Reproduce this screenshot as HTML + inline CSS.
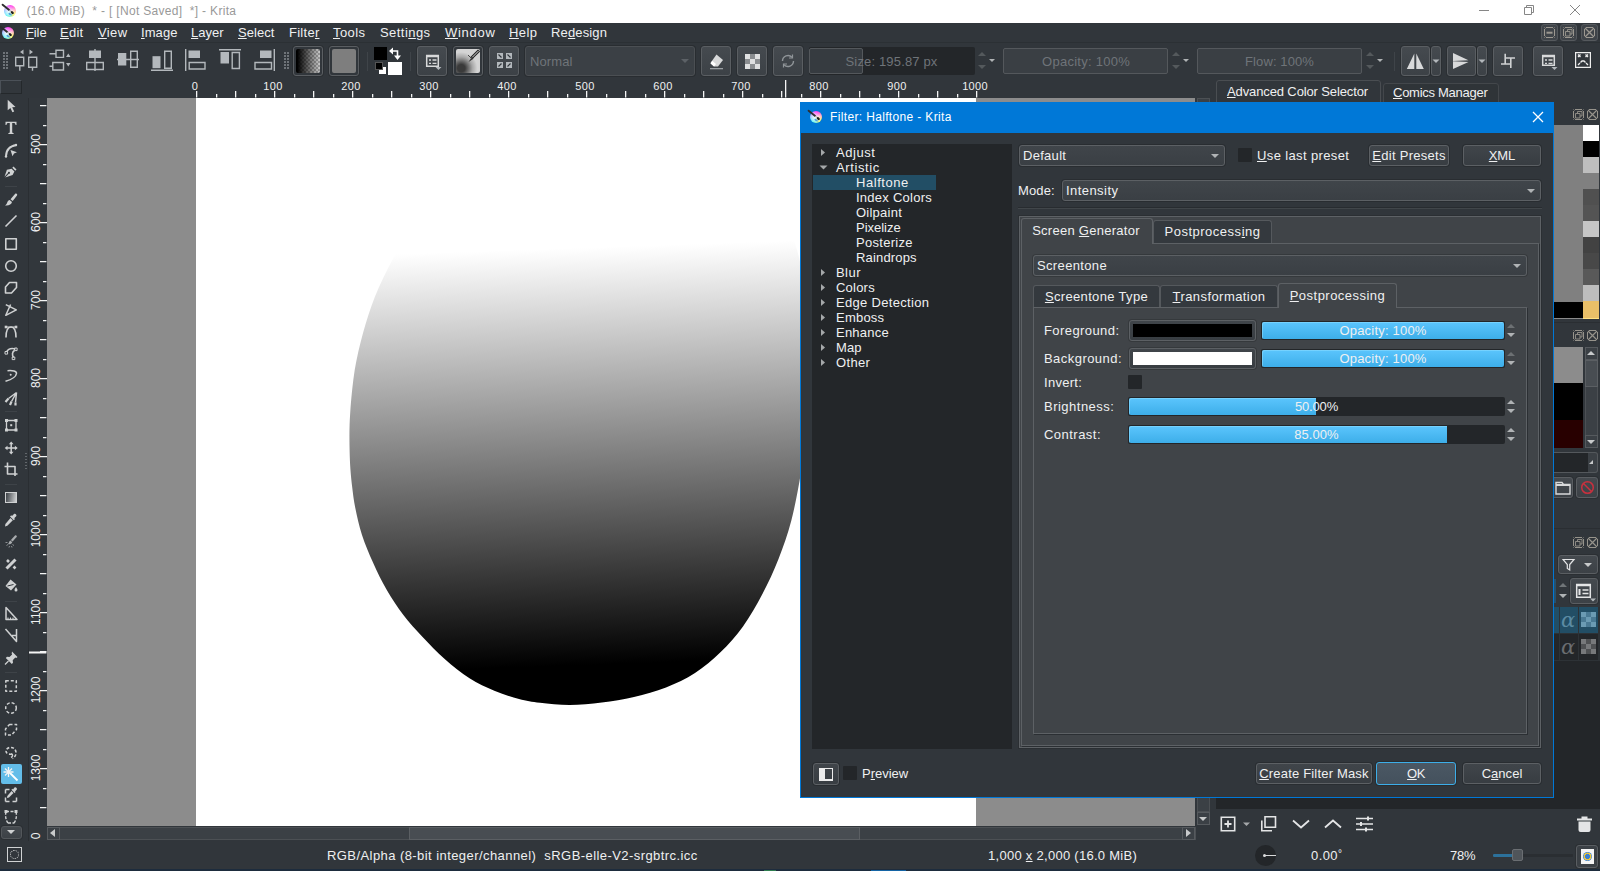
<!DOCTYPE html>
<html><head><meta charset="utf-8"><title>Krita</title>
<style>
*{box-sizing:border-box;margin:0;padding:0}
html,body{width:1600px;height:871px;overflow:hidden;background:#31363b}
body{position:relative;font-family:"Liberation Sans",sans-serif;font-size:13px;color:#eff0f1}
.abs{position:absolute}
u{text-decoration:underline;text-underline-offset:1px;text-decoration-thickness:1px}
.rl{width:40px;text-align:center;font-size:11px;line-height:12px;color:#eff0f1;letter-spacing:.300px}
.rlv{width:12px;height:40px;font-size:12px;line-height:12px;color:#eff0f1}
.rlv span{position:absolute;left:0;top:0;width:40px;height:12px;text-align:center;transform-origin:0 0;transform:rotate(-90deg) translate(-40px,0)}
/* dialog */
#dlg{left:800px;top:102px;width:754px;height:696px;background:#31363b;border:1px solid #0078d7;}
#dlg .tb{left:0;top:0;width:752px;height:30px;background:#0078d7}
.tree{background:#232629}
.ti{position:absolute;font-size:13px;line-height:15px;height:15px;white-space:nowrap;color:#eff0f1}
.combo{position:absolute;box-shadow:0 0 0 1px rgba(0,0,0,.16);border:1px solid #5c6064;border-radius:3px;background:linear-gradient(#40454a,#3a3f44);font-size:13px;color:#eff0f1;padding-left:3px;white-space:nowrap}
.btn{position:absolute;box-shadow:0 0 0 1px rgba(0,0,0,.16);border:1px solid #5c6064;border-radius:3px;background:linear-gradient(#40454a,#383d42);font-size:13px;color:#eff0f1;text-align:center;white-space:nowrap}
.arr{position:absolute;width:0;height:0;border-left:4px solid transparent;border-right:4px solid transparent;border-top:4px solid #b0b3b5}
.arru{position:absolute;width:0;height:0;border-left:4px solid transparent;border-right:4px solid transparent;border-bottom:4px solid #b0b3b5}
.tab{position:absolute;border:1px solid #55595d;border-bottom:none;border-radius:3px 3px 0 0;background:#34393e;font-size:13px;color:#eff0f1;text-align:center;white-space:nowrap}
.tab.sel{background:#404448;border-color:#5d6165}
.pane{position:absolute;border:1px solid #5d6165;background:#404448}
.lbl{position:absolute;font-size:13px;line-height:15px;white-space:nowrap;color:#eff0f1}
.sl{position:absolute;height:19px;background:#232629;border-radius:2px;overflow:hidden;font-size:13px;line-height:19px;text-align:center;color:#eff0f1}
.sl i{position:absolute;left:1px;top:1px;bottom:1px;background:linear-gradient(#5bc5fd,#3daee9);border-radius:2px 0 0 2px;box-shadow:inset 1px 1px 0 rgba(140,220,255,.55)}
.sl span{position:relative}
.chk{position:absolute;width:14px;height:14px;background:#232629;border-radius:1px}
.mi{top:25px;font-size:13px;line-height:16px;color:#eff0f1;white-space:nowrap}
.mdib{top:24px;width:17px;height:17px;border:1px solid #55595d;border-radius:3px;background:#3f4449}
.grip{width:6px;height:21px;background:radial-gradient(circle,#767b80 1px,transparent 1.300px) 0 0/3px 3px}
.tbtn{border:1px solid #5a5e62;border-radius:3px;background:linear-gradient(#454a4f,#3c4146);box-shadow:0 0 0 1px rgba(0,0,0,.12)}
.kico{width:18px;height:18px}
.kico i{position:absolute;left:2.800px;top:2.600px;width:12.600px;height:12.600px;border-radius:50%;background:radial-gradient(circle at 42% 55%,rgba(255,255,255,.95) 0,rgba(255,255,255,.6) 30%,rgba(255,255,255,0) 68%),conic-gradient(from 0deg,#ff3cf5 0deg,#ff5ae0 35deg,#ffb0c8 75deg,#fff36a 125deg,#eaff70 150deg,#5af0c8 185deg,#2ef2f5 215deg,#58c8ff 255deg,#b98cff 305deg,#ff3cf5 360deg)}
.kico svg{position:absolute;left:0;top:0}

</style></head>
<body>
<!-- titlebar -->
<div class="abs" style="left:0;top:0;width:1600px;height:23px;background:#fff"></div>
<div class="abs kico" style="left:1px;top:2px"><i></i><svg width="18" height="18" viewBox="0 0 18 18"><path d="M7.200 11.800Q9.500 14.600 12.300 12.800Q10 13.200 9 10.500z" fill="#3a8fe0" opacity=".85"/><path d="M1.600 2.700L8.200 8" stroke="#2e2e2e" stroke-width="1.900" stroke-linecap="round"/><path d="M8.500 8.200L10.300 9.700" stroke="#c4c4c4" stroke-width="1.500"/><ellipse cx="11.300" cy="10.600" rx="1.700" ry="1.200" transform="rotate(40 11.300 10.600)" fill="#1d1d1d"/></svg></div>
<div class="abs" style="letter-spacing:0.32px;font-size:12px;left:26.500px;top:4px;line-height:15px;color:#999;white-space:pre">(16.0 MiB)  * - [ [Not Saved]  *] - Krita</div>
<svg class="abs" style="left:1478px;top:4px" width="110" height="14" fill="none" stroke="#868686" stroke-width="1">
 <path d="M1 6.500H11"/>
 <path d="M46.500 3.500h7v7h-7zM48.500 3.500v-2h7v7h-2"/>
 <path d="M92 1l10 10M102 1l-10 10"/>
</svg>
<!-- menubar -->
<div class="abs" style="left:0;top:23px;width:1600px;height:21px;background:#31363b"></div>
<div class="abs kico" style="left:-1px;top:24px"><i></i><svg width="18" height="18" viewBox="0 0 18 18"><path d="M7.200 11.800Q9.500 14.600 12.300 12.800Q10 13.200 9 10.500z" fill="#3a8fe0" opacity=".85"/><path d="M1.600 2.700L8.200 8" stroke="#2e2e2e" stroke-width="1.900" stroke-linecap="round"/><path d="M8.500 8.200L10.300 9.700" stroke="#c4c4c4" stroke-width="1.500"/><ellipse cx="11.300" cy="10.600" rx="1.700" ry="1.200" transform="rotate(40 11.300 10.600)" fill="#1d1d1d"/></svg></div>
<div class="abs mi" style="letter-spacing:-0.11px;left:26px"><u>F</u>ile</div>
<div class="abs mi" style="letter-spacing:0.27px;left:60px"><u>E</u>dit</div>
<div class="abs mi" style="letter-spacing:0.39px;left:98px"><u>V</u>iew</div>
<div class="abs mi" style="letter-spacing:0.07px;left:141px"><u>I</u>mage</div>
<div class="abs mi" style="letter-spacing:-0.0px;left:191px"><u>L</u>ayer</div>
<div class="abs mi" style="letter-spacing:0.06px;left:238px"><u>S</u>elect</div>
<div class="abs mi" style="letter-spacing:0.27px;left:289px">Filte<u>r</u></div>
<div class="abs mi" style="letter-spacing:0.43px;left:333px"><u>T</u>ools</div>
<div class="abs mi" style="letter-spacing:0.44px;left:380px">Setti<u>n</u>gs</div>
<div class="abs mi" style="letter-spacing:0.71px;left:445px"><u>W</u>indow</div>
<div class="abs mi" style="letter-spacing:0.44px;left:509px"><u>H</u>elp</div>
<div class="abs mi" style="letter-spacing:0.13px;left:551px">Re<u>d</u>esign</div>
<!-- MDI buttons -->
<div class="abs mdib" style="left:1541px"></div><div class="abs mdib" style="left:1560px"></div><div class="abs mdib" style="left:1581px"></div>
<svg class="abs" style="left:1541px;top:24px" width="58" height="17" fill="none" stroke="#9c9890" stroke-width="1">
 <path d="M5 3.500h7M5 13.500h7M3.500 5v7M13.500 5v7M3.500 3.500l1 1M13.500 3.500l-1 1M3.500 13.500l1-1M13.500 13.500l-1-1"/><path d="M5.500 8.700h6" stroke-width="2"/>
 <path d="M24 3.500h7M24 13.500h7M22.500 5v7M32.500 5v7M22.500 3.500l1 1M32.500 3.500l-1 1M22.500 13.500l1-1M32.500 13.500l-1-1"/><path d="M24.500 7.500h4.500v4.500h-4.500zM26.500 7.500v-2h4.500v4.500h-2" stroke-width=".9"/>
 <path d="M45 3.500h7M45 13.500h7M43.500 5v7M53.500 5v7"/><path d="M44 4l9 9M53 4l-9 9" stroke-width="1.300"/>
</svg>
<!-- toolbar -->
<div class="abs" style="left:0;top:44px;width:1600px;height:34px;background:#31363b"></div>
<div class="abs" style="left:0;top:42px;width:1600px;height:1px;background:#2b3034"></div>
<!-- grips -->
<svg class="abs" style="left:3px;top:52px" width="5" height="17"><path d="M0 0h2v2h-2zM3 0h2v2h-2zM0 3h2v2h-2zM3 3h2v2h-2zM0 6h2v2h-2zM3 6h2v2h-2zM0 9h2v2h-2zM3 9h2v2h-2zM0 12h2v2h-2zM3 12h2v2h-2zM0 15h2v2h-2zM3 15h2v2h-2z" fill="#6e7378"/></svg>
<svg class="abs" style="left:284px;top:52px" width="5" height="17"><path d="M0 0h2v2h-2zM3 0h2v2h-2zM0 3h2v2h-2zM3 3h2v2h-2zM0 6h2v2h-2zM3 6h2v2h-2zM0 9h2v2h-2zM3 9h2v2h-2zM0 12h2v2h-2zM3 12h2v2h-2zM0 15h2v2h-2zM3 15h2v2h-2z" fill="#6e7378"/></svg>
<!-- align icons -->
<svg class="abs" style="left:0;top:44px" width="290" height="34" fill="none" stroke="#b3b8bc" stroke-width="1.4">
 <!-- 1 distribute h -->
 <path d="M23.5 5.5v5l-3.5-2.5zM29.5 5.5v5l3.5-2.5z" fill="#b3b8bc" stroke="none"/>
 <path d="M15.7 13.2h8v8.5h-8zM28.7 13.2h8v10h-8zM19.8 21.7v5M32.5 23.2v3.5"/>
 <!-- 2 distribute v -->
 <path d="M56 6.2h7.5v7.2h-7.5zM52.8 18.5h10.7v7.5h-10.7zM49.5 9.8h6.5M49.5 22.2h3.3"/>
 <path d="M66 13l2.3-3.5 2.3 3.5zM66 19l2.3 3.5 2.3-3.500z" fill="#b3b8bc" stroke="none"/>
 <!-- 3 align center h -->
 <rect x="89" y="6.5" width="12" height="7.5" fill="#b3b8bc" stroke="none"/>
 <path d="M86.7 18.5h16.600v7h-16.600zM95 5v22"/>
 <!-- 4 align center v -->
 <rect x="118" y="9" width="8.3" height="12.500" fill="#b3b8bc" stroke="none"/>
 <path d="M130.700 7.200h6.600v16h-6.600zM117 15.500h22"/>
 <!-- 5 align bottom -->
 <rect x="152.500" y="12.200" width="8" height="12" fill="#b3b8bc" stroke="none"/>
 <path d="M164.700 7.200h6.600v17h-6.600zM151 26.200h22"/>
 <!-- 6 align left -->
 <rect x="188.500" y="6.500" width="11.500" height="7.500" fill="#b3b8bc" stroke="none"/>
 <path d="M189.200 18.500h15.800v6.500h-15.800zM185.700 5v22"/>
 <!-- 7 align top -->
 <rect x="220.500" y="8" width="8.500" height="11.500" fill="#b3b8bc" stroke="none"/>
 <path d="M232.200 8.500h7.200v16h-7.200zM219 5.700h22"/>
 <!-- 8 align right -->
 <rect x="260" y="6.500" width="11.500" height="7.500" fill="#b3b8bc" stroke="none"/>
 <path d="M255 18.500h16.500v6.500h-16.500zM274.300 5v22"/>
</svg>
<!-- gradient / pattern buttons -->
<div class="abs tbtn" style="left:293px;top:46px;width:30px;height:30px;background:#31363b"><div class="abs" style="left:2px;top:2px;right:2px;bottom:2px;border-radius:2px;background:linear-gradient(90deg,#000 5%,rgba(0,0,0,0) 100%),repeating-conic-gradient(#999 0 25%,#c8c8c8 0 50%) 0 0/4px 4px"></div></div>
<div class="abs tbtn" style="left:329px;top:46px;width:30px;height:30px;background:#31363b"><div class="abs" style="left:2px;top:2px;right:2px;bottom:2px;border-radius:2px;background:#7e7e7e"></div></div>
<div class="abs" style="left:367px;top:52px;width:1px;height:19px;background:#3f4449"></div>
<!-- fg/bg -->
<div class="abs" style="left:388px;top:62px;width:14px;height:13px;background:#fff"></div>
<div class="abs" style="left:374px;top:47px;width:13px;height:13px;background:#000"></div>
<div class="abs" style="left:379px;top:67px;width:7px;height:7px;background:#fff"></div>
<div class="abs" style="left:375px;top:62px;width:8px;height:8px;background:#000;border:1px solid #555"></div>
<svg class="abs" style="left:388px;top:46px" width="14" height="15" fill="none" stroke="#fff" stroke-width="1.600"><path d="M2 5h7.500v6.500"/><path d="M5 1.500l-4 3.500 4 3.500zM6 9.500l3.500 4.500 3.500-4.500z" fill="#fff" stroke="none"/></svg>
<div class="abs" style="left:410px;top:52px;width:1px;height:19px;background:#3f4449"></div>
<!-- brush buttons -->
<div class="abs tbtn" style="left:417px;top:46px;width:30px;height:30px"></div>
<svg class="abs" style="left:417px;top:46px" width="30" height="30" fill="none" stroke="#d8d9da" stroke-width="1.500"><path d="M9.700 9.700h11.600v10.600h-11.600z"/><path d="M9 10h13" stroke-width="2.500"/><path d="M12 14h2M15.500 14h4M12 17.300h2M15.500 17.300h4" stroke-width="1.300"/><path d="M18.500 21h6l-3 3z" fill="#b3b8bc" stroke="none"/></svg>
<div class="abs tbtn" style="left:453px;top:46px;width:30px;height:30px;background:#31363b"><div class="abs" style="left:2px;top:2px;right:2px;bottom:2px;border-radius:2px;background:radial-gradient(circle at 22% 80%,#3a3a3a 0,#3a3a3a 14%,#a8a8a8 42%,rgba(200,200,200,0) 60%),#d4d4d4"></div></div>
<svg class="abs" style="left:453px;top:46px" width="30" height="30" fill="none"><path d="M26 4.500L18.500 12" stroke="#222" stroke-width="3"/><path d="M25.500 5L19 11.500" stroke="#ddd" stroke-width="1"/><path d="M18.800 11l-3.300 5 5-3.300z" fill="#333"/><path d="M15 9l4 4" stroke="#444" stroke-width="1"/></svg>
<div class="abs tbtn" style="left:489px;top:46px;width:30px;height:30px"></div>
<svg class="abs" style="left:489px;top:46px" width="30" height="30" fill="#b3b8bc"><path d="M8 7h6v6h-6zM17 7h6v6h-6zM8 16h6v6h-6zM17 16h6v6h-6z"/><path d="M9.500 8.500l3 3M18.500 8.500l3 3M9.500 20.500l3-3M18.500 20.500l3-3" stroke="#31363b" stroke-width="1.200"/></svg>
<!-- blend combo -->
<div class="combo" style="letter-spacing:0.1px;left:525px;top:46px;width:170px;height:30px;line-height:30px;color:#6f7479;border-color:#4b4f53;background:#3b4045;padding-left:4px">Normal<div class="arr" style="right:5px;top:12px;border-top-color:#5c6166"></div></div>
<div class="abs tbtn" style="left:701px;top:46px;width:30px;height:30px"></div>
<svg class="abs" style="left:701px;top:46px" width="30" height="30" fill="#d8d9da"><path d="M15.500 8.500l6.500 5.500-5 6.500h-4l-3.500-3.500z"/><path d="M9.500 17.500l3.500 3 2-2.500-3.800-3.300z" fill="#fff"/><path d="M9 22h13v1.300h-13z" fill="#9a9fa3"/></svg>
<div class="abs tbtn" style="left:737px;top:46px;width:30px;height:30px"></div>
<div class="abs" style="left:745px;top:54px;width:15px;height:15px;background:repeating-conic-gradient(#8a8d90 0 25%,#dfe0e1 0 50%) 0 0/10px 10px"></div>
<div class="abs tbtn" style="left:773px;top:46px;width:30px;height:30px"></div>
<svg class="abs" style="left:773px;top:46px" width="30" height="30" fill="none" stroke="#8f9498" stroke-width="1.400"><path d="M9.500 15a5.500 5.500 0 0 1 9.500-3.700M20.500 15a5.500 5.500 0 0 1-9.500 3.700"/><path d="M19.500 8.500v3.500h-3.500M10.500 21.500v-3.500h3.500" stroke-width="1.200"/></svg>
<!-- sliders -->
<div class="abs" style="left:809px;top:47px;width:166px;height:28px;background:#232629;border-radius:2px"></div>
<div class="abs" style="left:809px;top:48px;width:54px;height:26px;background:#363b40;border:1px solid #54585c;border-radius:2px"></div>
<div class="abs" style="letter-spacing:0.16px;left:845.500px;top:54px;line-height:16px;color:#6f7479;white-space:nowrap">Size: 195.87 px</div>
<div class="arru" style="left:978px;top:52px;opacity:.28"></div><div class="arr" style="left:978px;top:65px;opacity:.28"></div><div class="arr" style="left:989px;top:59px;border-width:3px 3px 0 3px"></div>
<div class="abs" style="left:1003px;top:48px;width:165px;height:26px;background:#3a3f44;border:1px solid #54585c;border-radius:2px"></div>
<div class="abs" style="letter-spacing:0.27px;left:1042px;top:54px;line-height:16px;color:#6f7479;white-space:nowrap">Opacity: 100%</div>
<div class="arru" style="left:1172px;top:52px;opacity:.28"></div><div class="arr" style="left:1172px;top:65px;opacity:.28"></div><div class="arr" style="left:1183px;top:59px;border-width:3px 3px 0 3px"></div>
<div class="abs" style="left:1197px;top:48px;width:165px;height:26px;background:#3a3f44;border:1px solid #54585c;border-radius:2px"></div>
<div class="abs" style="letter-spacing:0.11px;left:1245px;top:54px;line-height:16px;color:#6f7479;white-space:nowrap">Flow: 100%</div>
<div class="arru" style="left:1366px;top:52px;opacity:.28"></div><div class="arr" style="left:1366px;top:65px;opacity:.28"></div><div class="arr" style="left:1377px;top:59px;border-width:3px 3px 0 3px"></div>
<div class="abs" style="left:1394px;top:52px;width:1px;height:19px;background:#3f4449"></div>
<!-- mirror etc -->
<div class="abs tbtn" style="left:1401px;top:46px;width:29px;height:30px"></div>
<div class="abs tbtn" style="left:1431px;top:46px;width:10px;height:30px"></div>
<div class="abs tbtn" style="left:1447px;top:46px;width:29px;height:30px"></div>
<div class="abs tbtn" style="left:1477px;top:46px;width:10px;height:30px"></div>
<div class="abs tbtn" style="left:1493px;top:46px;width:30px;height:30px"></div>
<div class="abs tbtn" style="left:1533px;top:46px;width:30px;height:30px"></div>
<svg class="abs" style="left:1400px;top:44px" width="200" height="34" fill="#d8d9da">
 <path d="M14.300 9.500v15.500h-7.500zM16.300 9.500v15.500h7.500z"/>
 <path d="M32.500 15.500h7l-3.500 3.500z" fill="#b3b8bc"/>
 <path d="M53 9l15.500 7.200-15.500.8zM53 25l15.500-7-15.500-.8z"/>
 <path d="M78.500 15.500h7l-3.500 3.500z" fill="#b3b8bc"/>
 <g fill="none" stroke="#cfd1d2" stroke-width="1.600"><path d="M105.200 9.700V20.500M105.200 14H115M110.800 14V24M101 20H111.500"/></g>
 <g fill="none" stroke="#d8d9da" stroke-width="1.500"><path d="M142.700 11.700h11.600v9.600h-11.600z"/><path d="M142 12h13" stroke-width="2.500"/><path d="M145 16h2M148.500 16h4M145 19.300h2M148.500 19.300h4" stroke-width="1.300"/></g>
 <path d="M151.500 23h6l-3 3z" fill="#b3b8bc"/>
 <g fill="none" stroke="#eee" stroke-width="1.200"><path d="M175.600 8.600h14.800v14.800h-14.800z"/><path d="M178 10.500l2.500 2.500M180.500 10.500l-2.500 2.500M185.500 10.500l2.500 2.500M188 10.500l-2.500 2.500M178 21l2-2M188 21l-2-2M180.500 18.500l1.500-1.500h2l1.500 1.500" stroke-width="1.300"/></g>
</svg>
<!-- rulers -->
<div class="abs" style="left:0;top:78px;width:1215px;height:20px;background:#31363b"></div>
<div class="abs" style="left:28px;top:98px;width:19px;height:744px;background:#32373c;border-left:1px solid #2a2e32"></div>
<svg class="abs" style="left:47px;top:78px" width="1149" height="20"><path d="M149.65 13V19.400M169.65 15.900V19.400M188.65 13V19.400M208.65 15.900V19.400M227.65 13V19.400M247.65 15.900V19.400M266.65 13V19.400M286.65 15.900V19.400M305.65 13V19.400M325.65 15.900V19.400M344.65 13V19.400M364.65 15.900V19.400M383.65 13V19.400M403.65 15.900V19.400M422.65 13V19.400M442.65 15.900V19.400M461.65 13V19.400M481.65 15.900V19.400M500.65 13V19.400M520.65 15.900V19.400M539.65 13V19.400M559.65 15.900V19.400M578.65 13V19.400M598.65 15.900V19.400M617.65 13V19.400M637.65 15.900V19.400M656.65 13V19.400M676.65 15.900V19.400M695.65 13V19.400M715.65 15.900V19.400M734.65 13V19.400M754.65 15.900V19.400M773.65 13V19.400M793.65 15.900V19.400M812.65 13V19.400M832.65 15.900V19.400M851.65 13V19.400M871.65 15.900V19.400M890.65 13V19.400M910.65 15.900V19.400M929.65 13V19.400M738.65 2V19.400" stroke="#f4f5f5" stroke-width="1.300" fill="none"/></svg>
<div class="abs rl" style="left:175px;top:80px">0</div>
<div class="abs rl" style="left:253px;top:80px">100</div>
<div class="abs rl" style="left:331px;top:80px">200</div>
<div class="abs rl" style="left:409px;top:80px">300</div>
<div class="abs rl" style="left:487px;top:80px">400</div>
<div class="abs rl" style="left:565px;top:80px">500</div>
<div class="abs rl" style="left:643px;top:80px">600</div>
<div class="abs rl" style="left:721px;top:80px">700</div>
<div class="abs rl" style="left:799px;top:80px">800</div>
<div class="abs rl" style="left:877px;top:80px">900</div>
<div class="abs rl" style="left:955px;top:80px">1000</div>
<svg class="abs" style="left:28px;top:98px" width="19" height="728"><path d="M12 7.65H18.400M15 27.65H18.400M12 46.65H19M15 66.65H18.400M12 85.65H18.400M15 105.65H18.400M12 124.65H19M15 144.65H18.400M12 163.65H18.400M15 183.65H18.400M12 202.65H19M15 222.65H18.400M12 241.65H18.400M15 261.65H18.400M12 280.65H19M15 300.65H18.400M12 319.65H18.400M15 339.65H18.400M12 358.65H19M15 378.65H18.400M12 397.65H18.400M15 417.65H18.400M12 436.65H19M15 456.65H18.400M12 475.65H18.400M15 495.65H18.400M12 514.65H19M15 534.65H18.400M12 553.65H18.400M15 573.65H18.400M12 592.65H19M15 612.65H18.400M12 631.65H18.400M15 651.65H18.400M12 670.65H19M15 690.65H18.400M12 709.65H18.400" stroke="#f4f5f5" stroke-width="1.300" fill="none"/><path d="M1 554.500H18.400" stroke="#f4f5f5" stroke-width="2" fill="none"/></svg>
<div class="abs rlv" style="left:30px;top:124px"><span>500</span></div>
<div class="abs rlv" style="left:30px;top:202px"><span>600</span></div>
<div class="abs rlv" style="left:30px;top:280px"><span>700</span></div>
<div class="abs rlv" style="left:30px;top:358px"><span>800</span></div>
<div class="abs rlv" style="left:30px;top:436px"><span>900</span></div>
<div class="abs rlv" style="left:30px;top:514px"><span>1000</span></div>
<div class="abs rlv" style="left:30px;top:592px"><span>1100</span></div>
<div class="abs rlv" style="left:30px;top:670px"><span>1200</span></div>
<div class="abs rlv" style="left:30px;top:748px"><span>1300</span></div>
<div class="abs rlv" style="left:30px;top:816px"><span>0</span></div>

<!-- toolbox -->
<div class="abs" style="left:0;top:78px;width:28px;height:764px;background:#31363b"></div>
<div class="abs" style="left:0;top:80px;width:22px;height:14px;background:#32373c;border:1px solid #24282b;border-top-color:#4b5158;border-left-color:#4b5158"></div>
<div class="abs" style="left:1px;top:764px;width:21px;height:20px;background:#63bde9;border-radius:2px"></div>
<svg class="abs" style="left:0;top:98px" width="24" height="745" fill="none" stroke="#cfd1d2" stroke-width="1.500" stroke-linejoin="round">
 <g fill="#cfd1d2" stroke="none">
  <!-- arrow (y 100-112 abs => 2-14) -->
  <path d="M7.700 1.800v10.500l2.700-2.300 2 4.300 1.800-.8-2-4.200 3.300-.3z"/>
  <!-- T -->
  <path d="M5.500 23.800h11v3.200h-1c-.2-1.400-.6-1.900-2-1.900h-1.300v9c0 .8.400 1 1.500 1.100v.8h-5.400v-.8c1.100-.1 1.500-.3 1.500-1.100v-9h-1.300c-1.400 0-1.800.5-2 1.900h-1z"/>
  <!-- path edit arrowhead -->
  <path d="M10.500 52l6.500 2.200-3 1.300-1.500 2.800z"/>
  <!-- pen nib -->
  <path d="M13.500 68.500l3 3-1.200 1.200-3-3z"/>
  <path d="M11.600 70.800l2.800 2.800-1.800 3.400-7.400 2.500 3.600-3.700a1 1 0 1 0-.8-.8l-3.500 3.700 2.400-7z"/>
  <!-- brush -->
  <path d="M16 95.500c1 0 1.600 1 1 2l-4.300 5.500-2.200-1.800 4.500-5.300c.3-.3.600-.4 1-.4z"/>
  <path d="M9.700 102l2.300 2c-.5 2.500-3.500 4-7 3.400 1.500-.8 1.800-1.700 2.300-3.200.4-1.200 1.300-2 2.400-2.200z"/>
 </g>
 <path d="M6 58.500c0-6 3.500-10.500 10.500-11.500" stroke-width="1.800"/>
 <circle cx="16" cy="47" r="1.200" fill="#cfd1d2" stroke="none"/><circle cx="6" cy="58.500" r="1.200" fill="#cfd1d2" stroke="none"/>
 <path d="M5 88.500h12" stroke="#3e4348" stroke-width="1"/>
 <!-- line -->
 <path d="M5.500 128.500l11-11" stroke-width="1.600"/>
 <!-- rect -->
 <path d="M5.800 140.800h10.500v10.500h-10.500z" stroke-width="1.600"/>
 <!-- ellipse -->
 <circle cx="11" cy="168" r="5.300" stroke-width="1.600"/>
 <!-- polygon -->
 <path d="M9.500 184.500h7v5l-5 5.500h-6v-6z" stroke-width="1.600"/>
 <!-- polyline -->
 <path d="M5.800 206.700L16.300 211.800L5.800 217.300L10.600 206.500" stroke-width="1.500"/>
 <!-- bezier -->
 <path d="M6 239.500c0-7 2-10.500 5-10.500s5 3.500 5 10.500" stroke-width="1.600"/><path d="M6 229h10" stroke-width="1"/>
 <rect x="4.700" y="227.700" width="2.600" height="2.600" fill="#cfd1d2" stroke="none"/><rect x="14.700" y="227.700" width="2.600" height="2.600" fill="#cfd1d2" stroke="none"/>
 <!-- freehand path -->
 <path d="M6.500 254c1.500-3 5-4 9-3M14.500 252.500c-2.500 1.500-2.500 4.500-1 7" stroke-width="1.600"/>
 <rect x="5" y="253.500" width="2.600" height="2.600" stroke-width="1"/><rect x="12.200" y="259" width="2.600" height="2.600" stroke-width="1"/><rect x="14.500" y="250" width="2.600" height="2.600" stroke-width="1"/>
 <!-- dyna -->
 <path d="M5.500 283.200c5.500-1.500 10.500-4.500 11-7.700.3-2.300-4-3.300-9-2.800" stroke-width="1.500"/><circle cx="10.700" cy="276.800" r="1" fill="#cfd1d2" stroke="none"/>
 <!-- multibrush -->
 <path d="M16.500 294.500l-8 6M16.500 294.500l-5 9M16.500 294.500l-1 10" stroke-width="1.500"/>
 <path d="M8.500 300.500l-3 3.500M11.500 303.500l-1.500 3.500M15.500 304.500v3" stroke-width="2.200"/>
 <path d="M5 313.500h12" stroke="#3e4348" stroke-width="1"/>
 <!-- transform -->
 <path d="M6.500 322.500h9.500v9.500h-9.500z" stroke-width="1.300"/>
 <g fill="#cfd1d2" stroke="none"><rect x="5" y="321" width="3" height="3"/><rect x="14.500" y="321" width="3" height="3"/><rect x="5" y="330.500" width="3" height="3"/><rect x="14.500" y="330.500" width="3" height="3"/><rect x="10.200" y="326.200" width="2" height="2"/></g>
 <!-- move -->
 <path d="M11.200 345v10M6.200 350h10" stroke-width="1.500"/>
 <g fill="#cfd1d2" stroke="none"><path d="M11.200 343.500l2.300 2.800h-4.600zM11.200 356.500l2.300-2.800h-4.600zM4.700 350l2.800-2.300v4.600zM17.700 350l-2.800-2.300v4.600z"/></g>
 <!-- crop -->
 <path d="M7.500 364.500v11.500h10M4.500 368.500h10.500v9.500" stroke-width="1.600"/>
 <path d="M5 386.500h12" stroke="#3e4348" stroke-width="1"/>
 <!-- picker -->
 <g fill="#cfd1d2" stroke="none"><path d="M14 416c1.200-1.200 3.300 1 2.200 2.200l-2 2 .8.800-1.200 1.200-3.800-3.800 1.200-1.200.8.800z"/><path d="M10.500 420l2.300 2.300-5.500 5.500-2.300.6.400-2.500z"/></g>
 <!-- colorize -->
 <g fill="#a9acae" stroke="none"><path d="M15 437.500c1-1 2.500.5 1.600 1.600l-4 4.500-1.700-1.700z"/><path d="M10.500 442.500l1.700 1.700c-.5 1.600-2.300 2.300-4.500 2 .9-.6 1-1.300 1.400-2.300.2-.7.800-1.200 1.400-1.400z"/></g>
 <path d="M5.500 444.500h2M6.500 447.500l1.500-1M9 449.500l.5-1.500M12 449.500l-.5-1.500M14 447.500l-1.500-1" stroke="#8d9194" stroke-width="1"/>
 <!-- smart patch X -->
 <path d="M6.500 470.500l9-9" stroke-width="3"/><path d="M7 462l2 2M13.500 468.500l2 2" stroke-width="2.600"/>
 <!-- fill -->
 <g fill="#cfd1d2" stroke="none"><path d="M10.500 481.500l6 5-5.500 6-5.500-4.500z"/><path d="M16 489c.8 1.400 1.500 2.200 1.500 3a1.500 1.500 0 0 1-3 0c0-.8.700-1.600 1.500-3z"/></g>
 <path d="M7.500 488l6-1.500" stroke="#31363b" stroke-width="1"/>
 <path d="M5 503.500h12" stroke="#3e4348" stroke-width="1"/>
 <!-- assistant -->
 <path d="M6 509.500v12h11z" stroke-width="1.500"/><path d="M8 519.500v2M10.500 519.500v2M13 519.500v2" stroke-width="1"/>
 <!-- measure -->
 <path d="M5.500 531L16.500 543.500V531M12 537.500h4.500" stroke-width="1.500"/>
 <!-- pin -->
 <g fill="#cfd1d2" stroke="none"><path d="M12 553.500l5.500 5.500-1.200 1-1-.4-2.600 2.600.3 2.500-1.200 1.200-6-6 1.200-1.200 2.500.3 2.600-2.600-.4-1z"/></g><path d="M8.500 563l-3.500 3.500" stroke-width="1.300"/>
 <path d="M5 574.500h12" stroke="#3e4348" stroke-width="1"/>
 <!-- selections -->
 <path d="M5.800 582.800h10.500v10.500h-10.500z" stroke-width="1.500" stroke-dasharray="3 2"/>
 <circle cx="11" cy="610" r="5.300" stroke-width="1.500" stroke-dasharray="3 2"/>
 <path d="M9.500 626.500h7v5l-5 5.500h-6v-6z" stroke-width="1.500" stroke-dasharray="3 2"/>
 <path d="M12 656c-5 1-7-2-5.500-4.500 1.500-2.500 6.500-3 8.500 0 2 3 1 7-2.500 9" stroke-width="1.600" stroke-dasharray="3 1.800"/><path d="M11.500 655.500c1.500 1 1.500 3-.5 4" stroke-width="1.400"/>
 <!-- magic wand (selected) -->
 <path d="M10 675l7.500 7.500" stroke="#fff" stroke-width="1.800"/>
 <path d="M8.500 669v3M8.500 676v3M3.500 674h3M10.500 674h3M5 670.500l2 2M12 670.500l-2 2M5 677.500l2-2" stroke="#f4f4f4" stroke-width="1.300"/>
 <circle cx="8.500" cy="674" r="2.200" fill="#f4f4f4" stroke="none"/>
 <!-- similar select -->
 <path d="M5.500 691.500h4M5.500 691.500v4M5.500 703.500h4M5.500 703.500v-4M16.500 703.500h-4M16.500 703.500v-4" stroke-width="1.500"/>
 <g fill="#cfd1d2" stroke="none"><path d="M14.500 689.500c1.200-1.200 3.300 1 2.200 2.200l-1.700 1.700.6.600-1 1-3.200-3.200 1-1 .6.600z"/><path d="M11.500 693l2 2-4.500 4.500-2 .5.300-2z"/></g>
 <!-- bezier select -->
 <path d="M6 713.500h10M6 713.500c-1 5 0 9 2 11.500M16 713.500c1 5 0 9-2 11.500M8 725h6" stroke-width="1.400" stroke-dasharray="3 1.500"/>
 <g fill="#cfd1d2" stroke="none"><rect x="4.500" y="712" width="3" height="3"/><rect x="14.500" y="712" width="3" height="3"/></g>
</svg>
<!-- gradient tool -->
<div class="abs" style="left:5px;top:492px;width:12px;height:11px;border:1px solid #cfd1d2;background:linear-gradient(100deg,#3a3f44,#cfd1d2)"></div>
<!-- grip on ruler -->
<div class="abs" style="left:25px;top:452px;width:2px;height:18px;background:radial-gradient(circle,#62676b 0.700px,transparent 1px) 0 0/2px 3px"></div>
<!-- more button -->
<div class="abs tbtn" style="left:1px;top:826px;width:21px;height:13px;border-color:#53575b"></div>
<div class="arr" style="left:7px;top:830px;border-top-color:#cfd1d2"></div>
<!-- canvas -->
<div class="abs" style="left:47px;top:98px;width:1148px;height:728px;background:#8c8c8c;overflow:hidden">
<div class="abs" style="left:149px;top:0;width:780px;height:728px;background:#fff"></div>
<svg class="abs" style="left:0;top:0" width="1149" height="728">
 <defs><linearGradient id="bg" gradientUnits="userSpaceOnUse" x1="348" y1="156" x2="362.200" y2="573"><stop offset="0" stop-color="#fff"/><stop offset="1" stop-color="#000"/></linearGradient></defs>
 <path d="M349.0 156.3C348.4 157.2 347.4 158.0 345.3 162.0C343.2 166.0 339.0 174.2 336.1 180.3C333.2 186.4 330.3 192.6 327.9 198.7C325.4 204.8 323.4 210.9 321.4 217.0C319.4 223.1 317.6 229.3 315.9 235.4C314.2 241.5 312.7 247.6 311.3 253.7C309.9 259.8 308.7 265.9 307.7 272.0C306.7 278.1 306.0 284.3 305.3 290.4C304.6 296.5 304.1 302.7 303.6 308.8C303.2 314.9 302.8 320.6 302.6 327.0C302.4 333.4 302.4 339.7 302.5 347.0C302.6 354.3 302.9 363.8 303.4 371.0C303.9 378.2 304.5 383.6 305.3 390.0C306.1 396.4 306.6 401.7 308.2 409.5C309.8 417.3 312.0 427.8 315.0 437.0C318.0 446.2 321.9 455.4 326.0 464.6C330.1 473.8 334.7 483.3 339.8 492.0C344.9 500.7 350.4 509.2 356.4 517.0C362.4 524.8 368.7 531.7 375.6 539.0C382.5 546.3 389.9 554.1 397.7 561.0C405.5 567.9 414.2 575.0 422.5 580.3C430.8 585.6 439.1 589.2 447.3 592.7C455.6 596.2 464.4 599.0 472.0 601.0C479.6 603.0 484.6 603.8 493.0 604.8C501.4 605.8 512.3 607.0 522.6 607.0C532.9 607.0 544.1 605.8 554.8 604.5C565.5 603.2 576.3 601.5 587.0 599.0C597.7 596.5 608.8 593.4 619.0 589.4C629.2 585.4 638.9 580.9 648.0 575.0C657.1 569.1 665.7 561.8 673.7 554.0C681.7 546.2 689.0 538.1 696.0 528.4C703.0 518.7 709.5 507.2 715.4 496.0C721.3 484.8 726.7 473.3 731.5 461.0C736.3 448.7 740.6 436.8 744.4 422.3C748.1 407.8 751.6 389.1 754.0 374.0C756.4 358.9 757.8 345.7 759.0 332.0C760.2 318.3 760.7 305.3 761.0 292.0C761.3 278.7 761.5 267.0 761.0 252.0C760.5 237.0 759.3 216.7 758.0 202.0C756.7 187.3 754.8 173.9 753.0 164.0C751.2 154.1 748.0 146.1 747.0 142.5Z" fill="url(#bg)"/>
</svg>
</div>
<!-- scrollbars -->
<div class="abs" style="left:1196px;top:98px;width:19px;height:728px;background:#31363b"></div>
<div class="abs" style="left:1197px;top:98px;width:13px;height:714px;background:#3b4045;border:1px solid #4c5054"></div>
<div class="abs" style="left:47px;top:826px;width:1149px;height:15px;background:#31363b"></div>
<div class="abs" style="left:47px;top:827px;width:1149px;height:13px;background:#3b4045;border:1px solid #4c5054"></div>
<div class="abs" style="left:47px;top:827px;width:13px;height:13px;background:#3b4045;border:1px solid #565a5e"></div>
<div class="abs" style="left:50px;top:829px;width:0;height:0;border-top:4px solid transparent;border-bottom:4px solid transparent;border-right:5px solid #c8cacb"></div>
<div class="abs" style="left:409px;top:827px;width:451px;height:13px;background:#484d52;border:1px solid #5b5f63"></div>
<div class="abs" style="left:1182px;top:827px;width:13px;height:13px;background:#3b4045;border:1px solid #565a5e"></div>
<div class="abs" style="left:1186px;top:829px;width:0;height:0;border-top:4px solid transparent;border-bottom:4px solid transparent;border-left:5px solid #c8cacb"></div>
<div class="abs" style="left:1197px;top:812px;width:13px;height:13px;background:#3b4045;border:1px solid #565a5e"></div>
<div class="arr" style="left:1199px;top:817px;border-top-color:#c8cacb"></div>
<!-- rightdock -->
<div class="abs" style="left:1215px;top:78px;width:385px;height:764px;background:#31363b"></div>
<!-- dock tabs -->
<div class="abs" style="left:1216px;top:80px;width:165px;height:24px;border:1px solid #4a4e52;border-radius:3px 3px 0 0;background:#31363b"></div>
<div class="abs" style="left:1383px;top:83px;width:116px;height:21px;border:1px solid #43474b;border-radius:3px 3px 0 0;background:#2f3438"></div>
<div class="abs" style="letter-spacing:-0.12px;left:1227px;top:84px;line-height:15px;white-space:nowrap"><u>A</u>dvanced Color Selector</div>
<div class="abs" style="letter-spacing:-0.27px;left:1393px;top:85px;line-height:15px;white-space:nowrap"><u>C</u>omics Manager</div>
<!-- right strip beside dialog -->
<svg class="abs dki" style="left:1572px;top:108px" width="28" height="13"><g fill="none" stroke="#96938b" stroke-width="1"><path d="M3 1.500h7M3 11.500h7M1.500 3v7M11.500 3v7M1.500 1.500l1 1M11.500 1.500l-1 1M1.500 11.500l1-1M11.500 11.500l-1-1"/><path d="M3.500 5.500h4.500v4.500h-4.500zM5.500 5.500v-2h4.500v4.500h-2" stroke-width=".9"/><path d="M17 1.500h7M17 11.500h7M15.500 3v7M25.500 3v7"/><path d="M16 2l9 9M25 2l-9 9" stroke-width="1.200"/></g></svg>
<div class="abs" style="left:1554px;top:125px;width:29px;height:177px;background:#808080"></div>
<div class="abs" style="left:1583px;top:125px;width:16px;height:16px;background:#fff"></div>
<div class="abs" style="left:1583px;top:141px;width:16px;height:16px;background:#000"></div>
<div class="abs" style="left:1583px;top:157px;width:16px;height:16px;background:#bebebe"></div>
<div class="abs" style="left:1583px;top:173px;width:16px;height:16px;background:#808080"></div>
<div class="abs" style="left:1583px;top:189px;width:16px;height:16px;background:#505050"></div>
<div class="abs" style="left:1583px;top:205px;width:16px;height:16px;background:#545454"></div>
<div class="abs" style="left:1583px;top:221px;width:16px;height:16px;background:#c6c6c6"></div>
<div class="abs" style="left:1583px;top:237px;width:16px;height:16px;background:#424242"></div>
<div class="abs" style="left:1583px;top:253px;width:16px;height:16px;background:#484848"></div>
<div class="abs" style="left:1583px;top:269px;width:16px;height:16px;background:#595959"></div>
<div class="abs" style="left:1583px;top:285px;width:16px;height:17px;background:#bdbdbd"></div>
<div class="abs" style="left:1554px;top:302px;width:29px;height:16px;background:#000"></div>
<div class="abs" style="left:1554px;top:318px;width:29px;height:1px;background:#8a8a8a"></div>
<div class="abs" style="left:1583px;top:301px;width:16px;height:18px;background:#e9bf68;border-bottom:1px solid #ffe183"></div>
<div class="abs" style="left:1554px;top:322px;width:46px;height:1px;background:#2a2e32"></div>
<svg class="abs dki" style="left:1572px;top:329px" width="28" height="13"><g fill="none" stroke="#96938b" stroke-width="1"><path d="M3 1.500h7M3 11.500h7M1.500 3v7M11.500 3v7M1.500 1.500l1 1M11.500 1.500l-1 1M1.500 11.500l1-1M11.500 11.500l-1-1"/><path d="M3.500 5.500h4.500v4.500h-4.500zM5.500 5.500v-2h4.500v4.500h-2" stroke-width=".9"/><path d="M17 1.500h7M17 11.500h7M15.500 3v7M25.500 3v7"/><path d="M16 2l9 9M25 2l-9 9" stroke-width="1.200"/></g></svg>
<!-- palette list -->
<div class="abs" style="left:1554px;top:347px;width:29px;height:36px;background:#8c8c8c"></div>
<div class="abs" style="left:1554px;top:383px;width:29px;height:37px;background:#000"></div>
<div class="abs" style="left:1554px;top:420px;width:29px;height:28px;background:#280000"></div>
<div class="abs" style="left:1585px;top:347px;width:13px;height:101px;background:#3b4045;border:1px solid #4c5054"></div>
<div class="abs" style="left:1585px;top:347px;width:13px;height:13px;border:1px solid #565a5e;background:#3b4045"></div>
<div class="arru" style="left:1587px;top:351px;border-bottom-color:#c8cacb"></div>
<div class="abs" style="left:1585px;top:360px;width:13px;height:27px;border:1px solid #5b5f63;background:#484d52"></div>
<div class="abs" style="left:1585px;top:435px;width:13px;height:13px;border:1px solid #565a5e;background:#3b4045"></div>
<div class="arr" style="left:1587px;top:440px;border-top-color:#c8cacb"></div>
<div class="abs" style="left:1554px;top:452px;width:44px;height:21px;background:#3b4045;border:1px solid #54585c;border-left:none;border-radius:0 3px 3px 0"></div>
<div class="abs" style="left:1554px;top:453px;width:34px;height:19px;background:#232629"></div>
<div class="abs" style="left:1589px;top:460px;width:0;height:0;border-left:4px solid transparent;border-bottom:4px solid #c8cacb"></div>
<div class="abs tbtn" style="left:1550px;top:477px;width:23px;height:21px"></div>
<svg class="abs" style="left:1555px;top:480px" width="16" height="15" fill="none" stroke="#d8d9da" stroke-width="1.400"><path d="M1 2.500h6l1.500 2h6.500v9.500h-14z"/><path d="M1 5h14" stroke-width="2"/></svg>
<div class="abs tbtn" style="left:1576px;top:477px;width:22px;height:21px"></div>
<svg class="abs" style="left:1580px;top:480px" width="15" height="15" fill="none" stroke="#c9303e" stroke-width="1.500"><circle cx="7.500" cy="7.500" r="5.800"/><path d="M3.500 3.500l8 8"/></svg>
<div class="abs" style="left:1554px;top:528px;width:46px;height:1px;background:#2a2e32"></div>
<svg class="abs dki" style="left:1572px;top:536px" width="28" height="13"><g fill="none" stroke="#96938b" stroke-width="1"><path d="M3 1.500h7M3 11.500h7M1.500 3v7M11.500 3v7M1.500 1.500l1 1M11.500 1.500l-1 1M1.500 11.500l1-1M11.500 11.500l-1-1"/><path d="M3.500 5.500h4.500v4.500h-4.500zM5.500 5.500v-2h4.500v4.500h-2" stroke-width=".9"/><path d="M17 1.500h7M17 11.500h7M15.500 3v7M25.500 3v7"/><path d="M16 2l9 9M25 2l-9 9" stroke-width="1.200"/></g></svg>
<!-- layer docker -->
<div class="abs tbtn" style="left:1558px;top:555px;width:40px;height:19px"></div>
<svg class="abs" style="left:1562px;top:558px" width="14" height="14" fill="none" stroke="#e4e5e6" stroke-width="1.200"><path d="M1 1.500h11l-4.300 5v5.500l-2.400-1.500v-4z"/></svg>
<div class="arr" style="left:1584px;top:563px;border-top-color:#c8cacb"></div>
<div class="abs" style="left:1554px;top:579px;width:2px;height:24px;background:#27506b"></div>
<div class="arru" style="left:1559px;top:583px;opacity:.5"></div><div class="arr" style="left:1559px;top:594px"></div>
<div class="abs tbtn" style="left:1570px;top:578px;width:28px;height:26px"></div>
<svg class="abs" style="left:1570px;top:578px" width="30" height="28" fill="none" stroke="#e4e5e6" stroke-width="1.500"><path d="M6.700 6.700h13.600v12.600h-13.600z"/><path d="M6 7h15" stroke-width="2.500"/><path d="M9.500 11v6" stroke-width="2"/><path d="M12.500 12h6M12.500 15.500h6" stroke-width="1.500"/><path d="M20 20.500h6l-3 3z" fill="#b3b8bc" stroke="none"/></svg>
<div class="abs" style="left:1554px;top:607px;width:46px;height:202px;background:#232629"></div>
<div class="abs" style="left:1554px;top:607px;width:46px;height:26px;background:#224e65"></div>
<div class="abs" style="left:1559px;top:607px;width:1px;height:53px;background:#2d3236"></div>
<div class="abs" style="left:1578px;top:607px;width:1px;height:53px;background:#2d3236"></div>
<div class="abs" style="left:1598px;top:607px;width:2px;height:53px;background:#2d3236"></div>
<div class="abs" style="left:1554px;top:633px;width:46px;height:1px;background:#2d3236"></div>
<div class="abs" style="left:1554px;top:660px;width:46px;height:1px;background:#2d3236"></div>
<div class="abs" style="left:1561px;top:609px;font:italic 21px/22px 'DejaVu Serif','Liberation Serif',serif;color:#5b8ba3">α</div>
<div class="abs" style="left:1561px;top:636px;font:italic 21px/22px 'DejaVu Serif','Liberation Serif',serif;color:#6a6d70">α</div>
<div class="abs" style="left:1581px;top:612px;width:15px;height:15px;background:repeating-conic-gradient(#4a7a94 0 25%,#6b9bb3 0 50%) 0 0/10px 10px"></div>
<div class="abs" style="left:1581px;top:639px;width:15px;height:15px;background:repeating-conic-gradient(#4f5153 0 25%,#77797b 0 50%) 0 0/10px 10px"></div>
<!-- strip below dialog -->
<div class="abs" style="left:1216px;top:798px;width:384px;height:11px;background:#232629"></div>
<svg class="abs" style="left:1215px;top:812px" width="385" height="24" fill="none" stroke="#e4e5e6" stroke-width="1.600">
 <path d="M6.300 5.300h13.400v13.400h-13.400z"/><path d="M13 8.500v7M9.500 12h7" stroke-width="1.800"/>
 <path d="M28 10.500h7l-3.500 3.500z" fill="#a5a8aa" stroke="none"/>
 <path d="M50 4.800h10.500v10.500h-10.500z"/><path d="M46.800 8.500v10.200h10.200"/>
 <path d="M78 8.500l8 7 8-7" stroke-width="1.800"/>
 <path d="M110 15.500l8-7 8 7" stroke-width="1.800"/>
 <path d="M141 6.500h17M141 12h17M141 17.500h17" stroke-width="1.600"/><path d="M153 4.500v4M146 10v4M151 15.500v4" stroke-width="2"/>
 <g fill="#e4e5e6" stroke="none"><path d="M362 6.500h15v2h-15zM366.500 4.500h6v2h-6zM363.500 9.500h12v8.500a2 2 0 0 1-2 2h-8a2 2 0 0 1-2-2z"/></g>
</svg>
<!-- statusbar -->
<div class="abs" style="left:0;top:841px;width:1600px;height:30px;background:#31363b"></div>
<div class="abs" style="left:0;top:869px;width:1600px;height:2px;background:#1d2c3d"></div>
<div class="abs" style="left:764px;top:870px;width:12px;height:1px;background:#2f7d4f"></div>
<div class="abs" style="left:871px;top:870px;width:35px;height:1px;background:#1464a5"></div>
<div class="abs" style="left:7px;top:847px;width:15px;height:15px;border:1px solid #d0d2d3"></div>
<div class="abs" style="left:10px;top:850px;width:9px;height:9px;border:1px dotted #d0d2d3;border-radius:50%"></div>
<div class="abs" style="letter-spacing:0.43px;left:327px;top:848px;line-height:15px;white-space:pre">RGB/Alpha (8-bit integer/channel)  sRGB-elle-V2-srgbtrc.icc</div>
<div class="abs" style="letter-spacing:0.28px;left:988px;top:848px;line-height:15px;white-space:pre">1,000 <u>x</u> 2,000 (16.0 MiB)</div>
<div class="abs" style="left:1255px;top:845px;width:21px;height:21px;border-radius:50%;background:#232629"></div>
<div class="abs" style="left:1264px;top:855px;width:12px;height:1px;background:#d8d9da"></div>
<div class="abs" style="left:1263px;top:854px;width:3px;height:3px;border-radius:50%;background:#d8d9da"></div>
<div class="abs" style="letter-spacing:0.42px;left:1311px;top:848px;line-height:15px;white-space:nowrap">0.00</div><div class="abs" style="left:1338px;top:848px;font-size:10px;line-height:12px">°</div>
<div class="abs" style="letter-spacing:-0.17px;left:1450px;top:848px;line-height:15px;white-space:nowrap">78%</div>
<div class="abs" style="left:1493px;top:854px;width:80px;height:3px;background:#2a2e32;border-radius:1px"></div>
<div class="abs" style="left:1493px;top:854px;width:20px;height:3px;background:#2c719b;border-radius:1px"></div>
<div class="abs" style="left:1512px;top:849px;width:11px;height:12px;background:#50555a;border:1px solid #6a6e72;border-radius:2px"></div>
<div class="abs tbtn" style="left:1576px;top:845px;width:22px;height:23px;background:#3b4045"></div>
<div class="abs" style="left:1581px;top:849px;width:13px;height:15px;background:#f4f4f4"></div>
<div class="abs" style="left:1583px;top:852px;width:9px;height:9px;border-radius:50%;background:radial-gradient(#3a7fd0 35%,#e8c440 40%,#e8c440 60%,#3a7fd0 65%)"></div>
<!-- dialog -->
<div id="dlg" class="abs">
 <div class="abs tb"></div>
 <div class="abs kico" style="left:6px;top:5px"><i></i><svg width="18" height="18" viewBox="0 0 18 18"><path d="M7.200 11.800Q9.500 14.600 12.300 12.800Q10 13.200 9 10.500z" fill="#3a8fe0" opacity=".85"/><path d="M1.600 2.700L8.200 8" stroke="#2e2e2e" stroke-width="1.900" stroke-linecap="round"/><path d="M8.500 8.200L10.300 9.700" stroke="#c4c4c4" stroke-width="1.500"/><ellipse cx="11.300" cy="10.600" rx="1.700" ry="1.200" transform="rotate(40 11.300 10.600)" fill="#1d1d1d"/></svg></div>
 <div class="abs" style="letter-spacing:0.35px;font-size:12px;left:29px;top:7px;line-height:15px;color:#fff;white-space:nowrap">Filter: Halftone - Krita</div>
 <svg class="abs" style="left:730px;top:7px" width="14" height="14"><path d="M2 2L12 12M12 2L2 12" stroke="#fff" stroke-width="1.300" fill="none"/></svg>
 <!-- tree -->
 <div class="abs tree" style="left:11px;top:41px;width:200px;height:605px"></div>
 <div class="abs" style="left:12px;top:72px;width:123px;height:15px;background:#224e65"></div>
 <div class="ti" style="letter-spacing:0.54px;left:35px;top:42px">Adjust</div>
 <div class="ti" style="letter-spacing:0.6px;left:35px;top:57px">Artistic</div>
 <div class="ti" style="letter-spacing:0.55px;left:55px;top:72px">Halftone</div>
 <div class="ti" style="letter-spacing:0.25px;left:55px;top:87px">Index Colors</div>
 <div class="ti" style="letter-spacing:0.24px;left:55px;top:102px">Oilpaint</div>
 <div class="ti" style="letter-spacing:-0.02px;left:55px;top:117px">Pixelize</div>
 <div class="ti" style="letter-spacing:0.28px;left:55px;top:132px">Posterize</div>
 <div class="ti" style="letter-spacing:0.17px;left:55px;top:147px">Raindrops</div>
 <div class="ti" style="letter-spacing:0.45px;left:35px;top:162px">Blur</div>
 <div class="ti" style="letter-spacing:0.22px;left:35px;top:177px">Colors</div>
 <div class="ti" style="letter-spacing:0.31px;left:35px;top:192px">Edge Detection</div>
 <div class="ti" style="letter-spacing:0.22px;left:35px;top:207px">Emboss</div>
 <div class="ti" style="letter-spacing:0.23px;left:35px;top:222px">Enhance</div>
 <div class="ti" style="letter-spacing:0.1px;left:35px;top:237px">Map</div>
 <div class="ti" style="letter-spacing:0.36px;left:35px;top:252px">Other</div>
 <svg class="abs" style="left:18px;top:44px" width="12" height="226" fill="#a5a8aa">
  <path d="M2 2l4 3.5-4 3.5z"/><path d="M.5 18.500h8l-4 4z"/>
  <path d="M2 122l4 3.5-4 3.5z"/><path d="M2 137l4 3.5-4 3.5z"/><path d="M2 152l4 3.5-4 3.5z"/><path d="M2 167l4 3.5-4 3.5z"/><path d="M2 182l4 3.5-4 3.5z"/><path d="M2 197l4 3.5-4 3.5z"/><path d="M2 212l4 3.5-4 3.5z"/>
 </svg>
 <!-- top row -->
 <div class="combo" style="letter-spacing:0.29px;left:218px;top:42px;width:206px;height:21px;line-height:20px">Default<div class="arr" style="right:5px;top:8px"></div></div>
 <div class="chk" style="left:437px;top:45px"></div>
 <div class="lbl" style="letter-spacing:0.37px;left:456px;top:45px"><u>U</u>se last preset</div>
 <div class="btn" style="letter-spacing:0.28px;left:568px;top:42px;width:80px;height:21px;line-height:20px"><u>E</u>dit Presets</div>
 <div class="btn" style="letter-spacing:-0.11px;left:662px;top:42px;width:78px;height:21px;line-height:20px"><u>X</u>ML</div>
 <div class="lbl" style="letter-spacing:0.15px;left:217px;top:80px">Mode:</div>
 <div class="combo" style="letter-spacing:0.44px;left:261px;top:77px;width:479px;height:21px;line-height:20px">Intensity<div class="arr" style="right:5px;top:8px"></div></div>
 <div class="abs" style="left:217px;top:104px;width:524px;height:2px;background:#282c30;border-bottom:1px solid #41464a"></div>
 <!-- outer tab widget -->
 <div class="pane" style="left:218px;top:113px;width:522px;height:532px;box-shadow:0 0 0 1px #2b2f33"></div>
 <div class="pane" style="left:220px;top:140px;width:518px;height:503px;box-shadow:1px 1px 0 #2b2f33"></div>
 <div class="tab sel" style="letter-spacing:0.27px;left:220px;top:115px;width:132px;height:26px;line-height:24px;padding-right:2px">Screen <u>G</u>enerator</div>
 <div class="tab" style="letter-spacing:0.51px;left:352px;top:117px;width:119px;height:23px;line-height:22px">Postprocess<u>i</u>ng</div>
 <div class="combo" style="letter-spacing:0.35px;left:232px;top:152px;width:494px;height:21px;line-height:20px">Screentone<div class="arr" style="right:5px;top:8px"></div></div>
 <!-- inner tab widget -->
 <div class="pane" style="left:232px;top:204px;width:494px;height:427px;box-shadow:1px 1px 0 #2b2f33"></div>
 <div class="tab" style="letter-spacing:0.34px;left:232px;top:182px;width:127px;height:22px;line-height:21px"><u>S</u>creentone Type</div>
 <div class="tab" style="letter-spacing:0.43px;left:359px;top:182px;width:118px;height:22px;line-height:21px"><u>T</u>ransformation</div>
 <div class="tab sel" style="letter-spacing:0.48px;left:477px;top:180px;width:119px;height:25px;line-height:24px"><u>P</u>ostprocessing</div>
 <div class="lbl" style="letter-spacing:0.42px;left:243px;top:220px">Foreground:</div>
 <div class="lbl" style="letter-spacing:0.45px;left:243px;top:248px">Background:</div>
 <div class="lbl" style="letter-spacing:0.28px;left:243px;top:272px">Invert:</div>
 <div class="lbl" style="letter-spacing:0.49px;left:243px;top:296px">Brightness:</div>
 <div class="lbl" style="letter-spacing:0.47px;left:243px;top:324px">Contrast:</div>
 <div class="btn" style="left:328px;top:217px;width:127px;height:21px"><div class="abs" style="left:3px;top:3px;right:3px;bottom:3px;background:#000"></div></div>
 <div class="btn" style="left:328px;top:245px;width:127px;height:21px"><div class="abs" style="left:3px;top:3px;right:3px;bottom:3px;background:#fff"></div></div>
 <div class="chk" style="left:327px;top:272px"></div>
 <div class="sl" style="left:460px;top:218px;width:244px"><i style="right:1px;border-radius:2px"></i><span style="letter-spacing:0.2px;">Opacity: 100%</span></div>
 <div class="sl" style="left:460px;top:246px;width:244px"><i style="right:1px;border-radius:2px"></i><span style="letter-spacing:0.2px;">Opacity: 100%</span></div>
 <div class="sl" style="left:327px;top:294px;width:377px"><i style="width:186.500px"></i><span style="letter-spacing:-0.15px;">50.00%</span></div>
 <div class="sl" style="left:327px;top:322px;width:377px"><i style="width:317.500px"></i><span style="letter-spacing:0.07px;">85.00%</span></div>
 <div class="arru" style="left:706px;top:221px;opacity:.4"></div><div class="arr" style="left:706px;top:230px"></div>
 <div class="arru" style="left:706px;top:249px;opacity:.4"></div><div class="arr" style="left:706px;top:258px"></div>
 <div class="arru" style="left:706px;top:297px"></div><div class="arr" style="left:706px;top:306px"></div>
 <div class="arru" style="left:706px;top:325px"></div><div class="arr" style="left:706px;top:334px"></div>
 <!-- bottom row -->
 <div class="btn" style="left:12px;top:660px;width:26px;height:22px"><div class="abs" style="left:5px;top:3.500px;width:14px;height:13px;border:1.500px solid #ececec;border-left-width:6px;border-bottom-width:2px"></div></div>
 <div class="chk" style="left:42px;top:663px"></div>
 <div class="lbl" style="letter-spacing:-0.02px;left:61px;top:663px">P<u>r</u>eview</div>
 <div class="btn" style="letter-spacing:0.18px;left:455px;top:660px;width:116px;height:21px;line-height:20px"><u>C</u>reate Filter Mask</div>
 <div class="btn" style="letter-spacing:-0.49px;left:575px;top:659px;width:80px;height:23px;line-height:22px;border-color:#3daee9;background:linear-gradient(#4b5864,#44515d)"><u>O</u>K</div>
 <div class="btn" style="letter-spacing:0.02px;left:662px;top:660px;width:78px;height:21px;line-height:20px">C<u>a</u>ncel</div>
</div>
</body></html>
